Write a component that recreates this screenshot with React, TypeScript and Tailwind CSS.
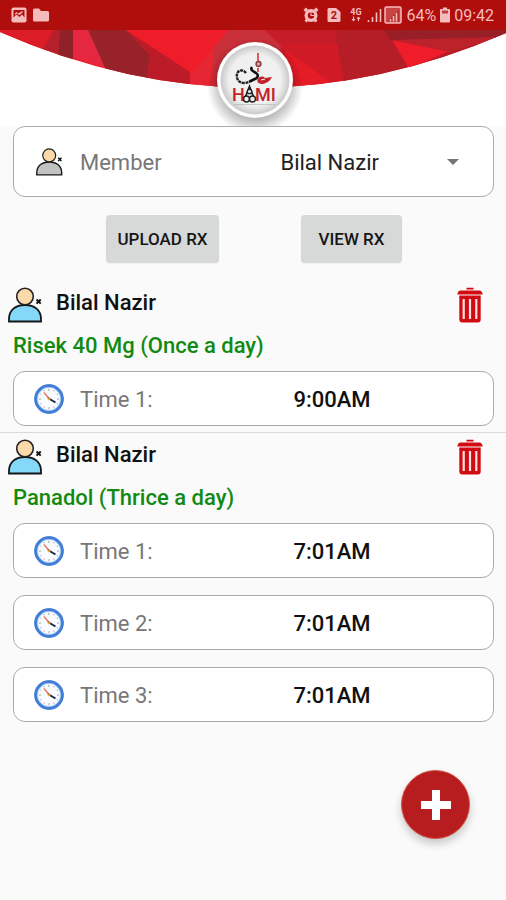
import { useState } from 'react'

interface Medicine {
  id: number
  member: string
  title: string
  times: string[]
}

const INITIAL: Medicine[] = [
  { id: 1, member: 'Bilal Nazir', title: 'Risek 40 Mg (Once a day)', times: ['9:00AM'] },
  { id: 2, member: 'Bilal Nazir', title: 'Panadol (Thrice a day)', times: ['7:01AM', '7:01AM', '7:01AM'] },
]

// ── Icons ────────────────────────────────────────────────────

function GalleryIcon() {
  return (
    <svg viewBox="0 0 16 16" className="size-4" aria-hidden="true">
      <rect x="0.5" y="0.5" width="15" height="15" rx="2" fill="#f6bcbc" />
      <path d="M2.500 3h11v7.500L11 7.500 8.500 10 5.500 7.500l-3 3z" fill="#b00d0d" />
      <path d="M4 6.500 5.500 5 7 6.500 11.500 4 12 5 8.500 8 5.500 6.500 4 8z" fill="#f6bcbc" />
    </svg>
  )
}

function FolderIcon() {
  return (
    <svg viewBox="0 0 16 14" className="h-3.5 w-4" aria-hidden="true">
      <path d="M1.500 0.500h4.500l2 2.500h6.500q1.500 0 1.500 1.500V12q0 1.500-1.500 1.500h-13Q0 13.500 0 12V2Q0 .5 1.500.5z" fill="#f6bcbc" />
    </svg>
  )
}

function AlarmIcon() {
  return (
    <svg viewBox="0 0 16 16" className="size-4" aria-hidden="true">
      <path d="M1.500 4 4 1.500M14.500 4 12 1.500M2.500 14.500 5 12M13.500 14.500 11 12" stroke="#f6bcbc" strokeWidth="3" />
      <circle cx="8" cy="8.500" r="6.500" fill="#f6bcbc" />
      <circle cx="8" cy="8.500" r="3.200" fill="#b00d0d" />
      <path d="M7.500 4.500v4.500h4V8h-3V4.500z" fill="#f6bcbc" />
    </svg>
  )
}

function SimIcon() {
  return (
    <svg viewBox="0 0 14 16" className="h-4 w-3.5" aria-hidden="true">
      <path d="M1.500 1H9l4.500 4v8.500q0 1.500-1.500 1.500H2Q.5 15 .5 13.500V2z" fill="#f6bcbc" />
      <text x="6.800" y="12" textAnchor="middle" fontSize="11" fontWeight="700" fontFamily="Roboto, sans-serif" fill="#b00d0d">2</text>
    </svg>
  )
}

function NetworkIcon() {
  return (
    <svg viewBox="0 0 14 16" className="h-4 w-3.5" aria-hidden="true">
      <text x="7" y="7.500" textAnchor="middle" fontSize="9" fontWeight="700" fontFamily="Roboto, sans-serif" fill="#f6bcbc">4G</text>
      <path d="M4.500 9.500v4M9.500 14v-4" stroke="#f6bcbc" strokeWidth="1.200" />
      <path d="M2.500 12h4l-2 2.500zM7.500 12h4l-2-2.500z" fill="#f6bcbc" />
    </svg>
  )
}

function SignalIcons() {
  return (
    <svg viewBox="0 0 35 18" className="h-[18px] w-[35px]" aria-hidden="true">
      <path d="M1.500 14v2M5.500 11v5M9.500 6.500V16M13.500 3v13" stroke="#f6bcbc" strokeWidth="1.600" />
      <rect x="18" y="1" width="16" height="16" rx="1.500" fill="#c94545" stroke="#f6bcbc" strokeWidth="1.500" />
      <path d="M20 15.500 32 4v11.500z" fill="#b82c2c" />
      <path d="M23.500 13v2.500M26.500 10v5.500M29.500 7v8.500" stroke="#f6bcbc" strokeWidth="1.600" />
    </svg>
  )
}

function BatteryIcon() {
  return (
    <svg viewBox="0 0 10 16" className="h-4 w-2.5" aria-hidden="true">
      <path d="M3 .5h4V2h2.200q.8 0 .8 1v11.500q0 1-1 1H1q-1 0-1-1V3q0-1 .8-1H3z" fill="#f6bcbc" />
      <path d="M2 3.500h6v3H2z" fill="#bf4040" />
    </svg>
  )
}

function PersonIcon({ body, className }: { body: string; className: string }) {
  return (
    <svg viewBox="0 0 36 36" className={className} aria-hidden="true">
      <path d="M1 34.500v-2.500C1 23 7.500 18 17 18S33 23 33 32v2.500z" fill={body} stroke="#161616" strokeWidth="1.800" />
      <circle cx="17" cy="9.500" r="8.300" fill="#fcd9a8" stroke="#222" strokeWidth="1.600" />
      <path d="m28.500 12.500 4.200 4.200M32.700 12.500l-4.200 4.200" stroke="#111" strokeWidth="1.900" />
    </svg>
  )
}

function ClockIcon() {
  return (
    <svg viewBox="0 0 30 30" className="size-[30px]" aria-hidden="true">
      <circle cx="15" cy="15" r="13.200" fill="#fafcff" stroke="#3f7fdc" strokeWidth="3" />
      <circle cx="15" cy="15" r="14.400" fill="none" stroke="#4b7ccc" strokeWidth="0.800" />
      <circle cx="15" cy="15" r="11.600" fill="none" stroke="#9cc0f3" strokeWidth="0.800" />
      <path d="M15 4.800V7M15 23v2.200M4.800 15H7M23 15h2.200M9.900 6.200l.7 1.200M20.100 6.200l-.7 1.200M6.200 9.900l1.200.7M23.800 9.900l-1.200.7M6.200 20.100l1.200-.7M23.800 20.100l-1.200-.7M9.900 23.800l.7-1.200M20.100 23.800l-.7-1.200" stroke="#7791b8" strokeWidth="0.800" />
      <path d="m9.800 8.500 6.200 7" stroke="#e5645f" strokeWidth="1.200" />
      <path d="m14 14 7.500 4.500" stroke="#20284f" strokeWidth="2" />
      <circle cx="15" cy="15" r="1.300" fill="#e8a32c" />
    </svg>
  )
}

function TrashIcon() {
  return (
    <svg viewBox="0 0 26 36" className="h-9 w-[26px]" aria-hidden="true">
      <path d="M9.500.8h7v1.600h-7zM3.500 3.500h19Q25 3.500 25.700 7.500H.3Q1 3.500 3.500 3.500z" fill="#d20a11" />
      <path d="M2.300 8.500h21.400v24q0 3-3 3H5.300q-3 0-3-3z" fill="#d20a11" />
      <path d="M6.700 12v20M13 12v20M19.300 12v20" stroke="#fbe2e2" strokeWidth="2.200" />
    </svg>
  )
}

// ── Header ───────────────────────────────────────────────────

function StatusBar() {
  return (
    <div className="flex h-[30px] items-center justify-between bg-[#b00d0d] pl-[11px] pr-3 text-[#f6bcbc]">
      <div className="flex items-center gap-1.5">
        <GalleryIcon />
        <FolderIcon />
      </div>
      <div className="flex items-center">
        <div className="flex items-center gap-2">
          <AlarmIcon />
          <SimIcon />
          <NetworkIcon />
        </div>
        <div className="ml-1 flex items-center gap-1">
          <SignalIcons />
          <span className="pt-0.5 text-base">64%</span>
          <BatteryIcon />
          <span className="pt-0.5 text-base">09:42</span>
        </div>
      </div>
    </div>
  )
}

function Logo() {
  return (
    <svg viewBox="0 0 100 100" className="size-[100px]" role="img" aria-label="Hami">
      <defs>
        <radialGradient id="logoShadow">
          <stop offset="0.65" stopColor="#000" stopOpacity="0.3" />
          <stop offset="1" stopColor="#000" stopOpacity="0" />
        </radialGradient>
        <radialGradient id="logoFace">
          <stop offset="0.75" stopColor="#f0f0f0" />
          <stop offset="1" stopColor="#c9c9c9" />
        </radialGradient>
      </defs>
      <circle cx="50" cy="56" r="48" fill="url(#logoShadow)" />
      <circle cx="50" cy="50" r="38" fill="#fdfdfd" />
      <circle cx="50" cy="50" r="34.500" fill="url(#logoFace)" />
      {/* minaret */}
      <path d="M53 23v8M53 38v4" stroke="#c81e24" strokeWidth="1.400" />
      <circle cx="53.500" cy="34" r="2.400" fill="#caa" stroke="#8c3a3a" strokeWidth="1.500" />
      {/* calligraphy */}
      <path d="M41 43c-3-4-8-3-9 1-1 5 2 9 7 9 4 0 6-2 9-3" fill="none" stroke="#222" strokeWidth="2.400" strokeDasharray="3 0.700" />
      <path d="M47 37c-2 3 1 4 4 6 3 2 2 5-1 6-2 1-4 1-5 3" fill="none" stroke="#111" strokeWidth="2.600" />
      <path d="M53 49c2-3 5-3 7-1l7-1c-2 4-5 6-9 7-4 0-7-2-5-5z" fill="#c3222a" />
      <path d="m56 50 4-1" stroke="#f1f1f1" />
      <g fontFamily="Roboto, sans-serif" fontSize="18" fontWeight="500" fill="#c3222a">
        <text x="27" y="71">H</text>
        <text x="50" y="71">MI</text>
      </g>
      <path d="m40 68 4.500-11.500L49 68" fill="none" stroke="#222" strokeWidth="1.800" />
      <circle cx="44.500" cy="61.500" r="2.200" fill="#eee" stroke="#222" strokeWidth="1.300" />
      <circle cx="41.500" cy="69" r="3" fill="#eee" stroke="#222" strokeWidth="1.500" />
      <circle cx="47.500" cy="69" r="3" fill="#eee" stroke="#222" strokeWidth="1.500" />
      <path d="M29 74.500h42" stroke="#bbb" strokeWidth="1" strokeDasharray="2 0.600" />
    </svg>
  )
}

function Banner() {
  return (
    <header className="relative overflow-hidden bg-white">
      <svg viewBox="0 0 506 96" preserveAspectRatio="none" className="block h-24 w-full" aria-hidden="true">
        <defs>
          <clipPath id="arc">
            <path d="M0 0H506V3Q253 113 0 2z" />
          </clipPath>
        </defs>
        <g clipPath="url(#arc)">
          <path d="M0 0h506v60H0z" fill="#ee1d29" />
          <path d="M0 0h56L43 30 0 14z" fill="#dc1c26" />
          <path d="M54 0h12l-4 30-22-6z" fill="#b5202a" />
          <path d="M60 0h13v32H58z" fill="#8f2228" />
          <path d="M73 0h17l18 38-35-10z" fill="#e52840" />
          <path d="M88 0h38l24 25-2 27-42-12z" fill="#98222a" />
          <path d="M126 0 190 42v15h-45l5-32z" fill="#bb1c27" />
          <path d="M229 0 190 45v15h60V0z" fill="#e62632" />
          <path d="M229 0h60l-4 60h-72V18z" fill="#c9303a" />
          <path d="M265 0h72v14l-56 2z" fill="#c51c27" />
          <path d="m281 14 54-1 12 42-65 5z" fill="#d01b26" />
          <path d="m285 20 45 32-45 9z" fill="#e51b26" />
          <path d="M337 0h169v12l-97 30-64 14-9-43z" fill="#b51e27" />
          <path d="M384 0h122v8l-115 3z" fill="#981f27" />
          <path d="m392 10 57 11-40 18z" fill="#ee1d29" />
          <path d="m392 10 108-3-51 15z" fill="#bd222b" />
        </g>
      </svg>
      <div className="absolute inset-x-0 top-0 flex justify-center pl-1">
        <Logo />
      </div>
    </header>
  )
}

// ── Content ──────────────────────────────────────────────────

function TimeRow({ label, time }: { label: string; time: string }) {
  return (
    <div className="flex h-[55px] items-center rounded-xl border border-[#aaa] bg-white text-[22px] leading-8">
      <div className="flex w-[55%] items-center gap-4 pl-5">
        <ClockIcon />
        <span className="pt-0.5 text-[#777]">{label}</span>
      </div>
      <span className="px-4 pt-0.5 font-medium text-[#111]">{time}</span>
    </div>
  )
}

function MedicineEntry({ medicine, onDelete }: { medicine: Medicine; onDelete: () => void }) {
  return (
    <li className="border-b border-[#dadada] pb-1.5 pt-1.5 last:border-b-0">
      <div className="flex items-start justify-between pl-2 pr-[23px]">
        <div className="flex items-start gap-3">
          <PersonIcon body="#84d8f8" className="size-9" />
          <h2 className="text-[22px] font-medium leading-8 text-[#111]">{medicine.member}</h2>
        </div>
        <button type="button" aria-label={`Delete ${medicine.title}`} onClick={onDelete}>
          <TrashIcon />
        </button>
      </div>
      <p className="px-[13px] pt-2 text-[22px] font-medium leading-[30px] text-[#128a12]">{medicine.title}</p>
      <div className="mt-2.5 flex flex-col gap-[17px] pl-[13px] pr-3">
        {medicine.times.map((time, i) => (
          <TimeRow key={i} label={`Time ${i + 1}:`} time={time} />
        ))}
      </div>
    </li>
  )
}

export default function App() {
  const [member, setMember] = useState('Bilal Nazir')
  const [medicines, setMedicines] = useState(INITIAL)

  return (
    <div className="relative min-h-screen bg-[#fafafa] font-[Roboto,sans-serif]">
      <StatusBar />
      <Banner />

      <main>
        <div className="ml-[13px] mr-3 flex h-[71px] items-center rounded-xl border border-[#aaa] bg-white pt-px text-[22px]">
          <label htmlFor="member" className="flex w-[55%] items-center gap-4 pl-[22px] text-[#777]">
            <PersonIcon body="#c2c2c2" className="size-7" />
            Member
          </label>
          <div className="relative flex-1">
            <select
              id="member"
              value={member}
              onChange={(e) => setMember(e.target.value)}
              className="w-full appearance-none bg-transparent px-[3px] text-[#222] outline-none"
            >
              <option>Bilal Nazir</option>
            </select>
            <svg viewBox="0 0 12 6" className="pointer-events-none absolute right-[34px] top-1/2 h-1.5 w-3 -translate-y-1/2" aria-hidden="true">
              <path d="M0 0h12L6 6z" fill="#757575" />
            </svg>
          </div>
        </div>

        <div className="grid grid-cols-2 pl-[68px] pr-[60px] pt-[18px]">
          <div className="flex justify-center">
            <button type="button" className="h-12 rounded-sm bg-[#d6d9d8] px-[11px] pt-0.5 text-[17px] font-medium text-[#161616] shadow-xs">
              UPLOAD RX
            </button>
          </div>
          <div className="flex justify-center">
            <button type="button" className="h-12 rounded-sm bg-[#d6d9d8] px-[17px] pt-0.5 text-[17px] font-medium text-[#161616] shadow-xs">
              VIEW RX
            </button>
          </div>
        </div>

        <ul className="pt-[18px]">
          {medicines.map((m) => (
            <MedicineEntry
              key={m.id}
              medicine={m}
              onDelete={() => setMedicines(medicines.filter((x) => x.id !== m.id))}
            />
          ))}
        </ul>
      </main>

      <button
        type="button"
        aria-label="Add medicine"
        className="fixed bottom-[61px] right-9 flex size-[69px] items-center justify-center rounded-full border border-[#d0533f] bg-[#b71c1f] shadow-[0_5px_9px_rgba(0,0,0,0.2)]"
      >
        <svg viewBox="0 0 30 30" className="size-[30px]" aria-hidden="true">
          <path d="M11 0h8v11h11v8H19v11h-8V19H0v-8h11z" fill="#fff" />
        </svg>
      </button>
    </div>
  )
}
